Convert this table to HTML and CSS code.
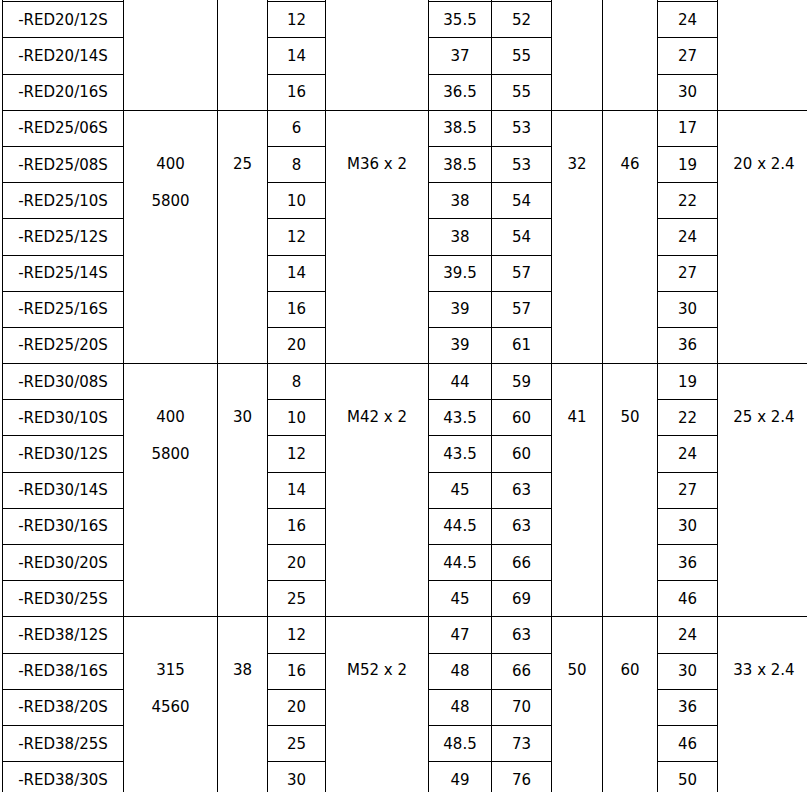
FILE: index.html
```html
<!DOCTYPE html>
<html>
<head>
<meta charset="utf-8">
<link rel="stylesheet" href="styles.css">
</head>
<body>
<div class="wrap">
<table class="spec">
<colgroup>
<col class="c-name"><col class="c-pn"><col class="c-dn"><col class="c-d"><col class="c-thr"><col class="c-l1"><col class="c-l2"><col class="c-s1"><col class="c-s2"><col class="c-t"><col class="c-o">
</colgroup>
<tbody>
<tr><td></td><td rowspan="4"></td><td rowspan="4"></td><td></td><td rowspan="4"></td><td></td><td></td><td rowspan="4"></td><td rowspan="4"></td><td></td><td rowspan="4"></td></tr>
<tr><td>-RED20/12S</td><td>12</td><td>35.5</td><td>52</td><td>24</td></tr>
<tr><td>-RED20/14S</td><td>14</td><td>37</td><td>55</td><td>27</td></tr>
<tr><td>-RED20/16S</td><td>16</td><td>36.5</td><td>55</td><td>30</td></tr>

<tr><td>-RED25/06S</td><td rowspan="7" class="grp">400<br>5800</td><td rowspan="7" class="grp">25</td><td>6</td><td rowspan="7" class="grp">M36 x 2</td><td>38.5</td><td>53</td><td rowspan="7" class="grp">32</td><td rowspan="7" class="grp">46</td><td>17</td><td rowspan="7" class="grp">20 x 2.4</td></tr>
<tr><td>-RED25/08S</td><td>8</td><td>38.5</td><td>53</td><td>19</td></tr>
<tr><td>-RED25/10S</td><td>10</td><td>38</td><td>54</td><td>22</td></tr>
<tr><td>-RED25/12S</td><td>12</td><td>38</td><td>54</td><td>24</td></tr>
<tr><td>-RED25/14S</td><td>14</td><td>39.5</td><td>57</td><td>27</td></tr>
<tr><td>-RED25/16S</td><td>16</td><td>39</td><td>57</td><td>30</td></tr>
<tr><td>-RED25/20S</td><td>20</td><td>39</td><td>61</td><td>36</td></tr>

<tr><td>-RED30/08S</td><td rowspan="7" class="grp">400<br>5800</td><td rowspan="7" class="grp">30</td><td>8</td><td rowspan="7" class="grp">M42 x 2</td><td>44</td><td>59</td><td rowspan="7" class="grp">41</td><td rowspan="7" class="grp">50</td><td>19</td><td rowspan="7" class="grp">25 x 2.4</td></tr>
<tr><td>-RED30/10S</td><td>10</td><td>43.5</td><td>60</td><td>22</td></tr>
<tr><td>-RED30/12S</td><td>12</td><td>43.5</td><td>60</td><td>24</td></tr>
<tr><td>-RED30/14S</td><td>14</td><td>45</td><td>63</td><td>27</td></tr>
<tr><td>-RED30/16S</td><td>16</td><td>44.5</td><td>63</td><td>30</td></tr>
<tr><td>-RED30/20S</td><td>20</td><td>44.5</td><td>66</td><td>36</td></tr>
<tr><td>-RED30/25S</td><td>25</td><td>45</td><td>69</td><td>46</td></tr>

<tr><td>-RED38/12S</td><td rowspan="5" class="grp">315<br>4560</td><td rowspan="5" class="grp">38</td><td>12</td><td rowspan="5" class="grp">M52 x 2</td><td>47</td><td>63</td><td rowspan="5" class="grp">50</td><td rowspan="5" class="grp">60</td><td>24</td><td rowspan="5" class="grp">33 x 2.4</td></tr>
<tr><td>-RED38/16S</td><td>16</td><td>48</td><td>66</td><td>30</td></tr>
<tr><td>-RED38/20S</td><td>20</td><td>48</td><td>70</td><td>36</td></tr>
<tr><td>-RED38/25S</td><td>25</td><td>48.5</td><td>73</td><td>46</td></tr>
<tr><td>-RED38/30S</td><td>30</td><td>49</td><td>76</td><td>50</td></tr>
</tbody>
</table>
</div>
</body>
</html>
```

FILE: styles.css
```css
html, body {
  margin: 0;
  padding: 0;
  background: #fff;
  overflow: hidden;
}

.wrap {
  padding-left: 2px;
  width: 820px;
}

.spec {
  margin-top: -35px;
  border-collapse: collapse;
  table-layout: fixed;
  width: 808px;
  font-family: "DejaVu Sans", Verdana, sans-serif;
  font-size: 15px;
  color: #000;
}

.spec tr {
  height: 36.2px;
}

.spec td {
  border: 1px solid #000;
  padding: 0;
  text-align: center;
  vertical-align: middle;
  line-height: 18px;
  white-space: nowrap;
}

.spec td.grp {
  vertical-align: top;
  padding-top: 35px;
  line-height: 37px;
}

.c-name { width: 121px; }
.c-pn { width: 94px; }
.c-dn { width: 50px; }
.c-d { width: 58px; }
.c-thr { width: 103px; }
.c-l1 { width: 63px; }
.c-l2 { width: 60px; }
.c-s1 { width: 51px; }
.c-s2 { width: 55px; }
.c-t { width: 60px; }
.c-o { width: 93px; }
```
